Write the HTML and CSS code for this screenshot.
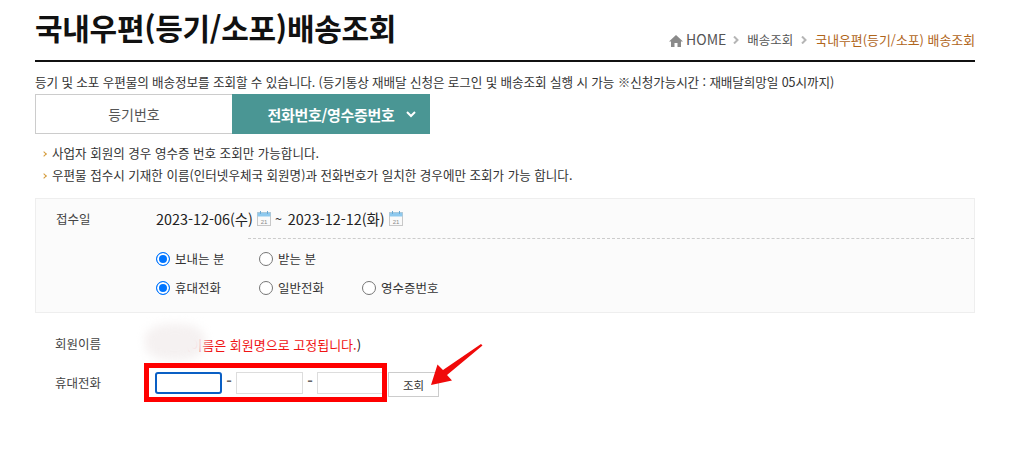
FILE: index.html
```html
<!DOCTYPE html>
<html lang="ko">
<head>
    <meta charset="utf-8">
    <title>국내우편(등기/소포) 배송조회</title>
    <link rel="stylesheet" href="styles.css">
</head>
<body>
    <div class="page-head">
        <h1>국내우편(등기/소포)배송조회</h1>
        <div class="crumbs">
            <svg class="home-icon" width="14" height="12" viewBox="0 0 14 12"><path d="M7 0 L14 6.5 H12 V12 H8.5 V8 H5.5 V12 H2 V6.5 H0 Z" fill="#8a8a8a"/></svg>
            <span class="crumb-home">HOME</span>
            <svg class="crumb-arrow" width="6" height="8" viewBox="0 0 6 8"><path d="M1 0.5 L4.5 4 L1 7.5" fill="none" stroke="#b5b5b5" stroke-width="2"/></svg>
            <span>배송조회</span>
            <svg class="crumb-arrow" width="6" height="8" viewBox="0 0 6 8"><path d="M1 0.5 L4.5 4 L1 7.5" fill="none" stroke="#b5b5b5" stroke-width="2"/></svg>
            <span class="crumb-current">국내우편(등기/소포) 배송조회</span>
        </div>
    </div>

    <p class="intro">등기 및 소포 우편물의 배송정보를 조회할 수 있습니다. (등기통상 재배달 신청은 로그인 및 배송조회 실행 시 가능 ※신청가능시간 : 재배달희망일 05시까지)</p>

    <div class="tabs">
        <div class="tab">등기번호</div>
        <div class="tab tab-on">
            전화번호/영수증번호
            <svg width="10" height="7" viewBox="0 0 10 7"><path d="M1 1 L5 5 L9 1" fill="none" stroke="#fff" stroke-width="2"/></svg>
        </div>
    </div>

    <ul class="notes">
        <li>사업자 회원의 경우 영수증 번호 조회만 가능합니다.</li>
        <li>우편물 접수시 기재한 이름(인터넷우체국 회원명)과 전화번호가 일치한 경우에만 조회가 가능 합니다.</li>
    </ul>

    <div class="panel">
        <div class="date-row">
            <div class="label">접수일</div>
            <div class="dates">
                <span>2023-12-06(수)</span>
                <svg class="cal" width="14" height="15" viewBox="0 0 14 15"><rect x="0.5" y="1.5" width="13" height="13" fill="#fafafa" stroke="#c8c8c8"/><rect x="0.5" y="1.5" width="13" height="4" fill="#8ec9ee"/><path d="M3.5 0 V3 M10.5 0 V3" stroke="#6aa9d4"/><text x="7" y="12.5" font-size="6" text-anchor="middle" fill="#8a8a8a" font-family="Liberation Sans">21</text></svg>
                <span class="tilde">~</span>
                <span>2023-12-12(화)</span>
                <svg class="cal" width="14" height="15" viewBox="0 0 14 15"><rect x="0.5" y="1.5" width="13" height="13" fill="#fafafa" stroke="#c8c8c8"/><rect x="0.5" y="1.5" width="13" height="4" fill="#8ec9ee"/><path d="M3.5 0 V3 M10.5 0 V3" stroke="#6aa9d4"/><text x="7" y="12.5" font-size="6" text-anchor="middle" fill="#8a8a8a" font-family="Liberation Sans">21</text></svg>
            </div>
        </div>
        <div class="radio-row">
            <label class="radio"><i class="dot dot-on"></i>보내는 분</label>
            <label class="radio"><i class="dot"></i>받는 분</label>
        </div>
        <div class="radio-row">
            <label class="radio"><i class="dot dot-on"></i>휴대전화</label>
            <label class="radio"><i class="dot"></i>일반전화</label>
            <label class="radio"><i class="dot"></i>영수증번호</label>
        </div>
    </div>

    <div class="form-row name-row">
        <div class="label">회원이름</div>
        <div class="name-text">
            <span class="blurred">이름</span><span class="warn">(이름은 회원명으로 고정됩니다.</span>)
            <span class="smudge"></span>
        </div>
    </div>
    <div class="form-row phone-row">
        <div class="label">휴대전화</div>
        <div class="phone">
            <span class="box box-focus"></span><span class="dash">-</span>
            <span class="box"></span><span class="dash">-</span>
            <span class="box box-last"></span>
            <span class="search-btn">조회</span>
            <span class="red-frame"></span>
            <svg class="red-arrow" width="60" height="50" viewBox="0 0 60 50"><path d="M54.5 3.5 L19 33 L24 38.5 L3 43 L9.5 22.5 L15 28 L53 2 Z" fill="#f00a0a"/></svg>
        </div>
    </div>
</body>
</html>
```

FILE: styles.css
```css
* {
    box-sizing: border-box;
}
body {
    margin: 0;
    width: 1027px;
    height: 456px;
    overflow: hidden;
    padding: 0 52px 0 35px;
    background: #fff;
    font-family: "Noto Sans CJK KR", "Noto Sans", sans-serif;
    font-size: 12.5px;
    color: #333;
}

/* title and breadcrumb */
.page-head {
    height: 62px;
    border-bottom: 2px solid #111;
    display: flex;
    justify-content: space-between;
    align-items: flex-start;
}
h1 {
    margin: 7px 0 0;
    font-size: 30px;
    line-height: 40px;
    font-weight: 700;
    letter-spacing: -0.3px;
    color: #111;
}
.crumbs {
    margin-top: 29px;
    display: flex;
    align-items: center;
    gap: 7px;
    height: 20px;
    font-size: 12.5px;
    color: #555;
    white-space: nowrap;
}
.crumb-home {
    font-size: 14px;
    margin-left: -4px;
    margin-right: -1px;
}
.crumb-arrow {
    margin: 2px 1px 0;
}
.crumb-current {
    font-size: 12.9px;
    color: #b0651a;
}
.home-icon {
    margin-top: 4px;
}

.intro {
    margin: 11px 0 0;
    height: 21px;
    line-height: 18px;
    font-size: 12.6px;
    letter-spacing: -0.1px;
    white-space: nowrap;
    color: #333;
}

/* tabs */
.tabs {
    display: flex;
    width: 395px;
    height: 40px;
}
.tab {
    width: 197px;
    border: 1px solid #ccc;
    border-right: none;
    display: flex;
    align-items: center;
    justify-content: center;
    font-size: 14px;
    color: #555;
}
.tab-on {
    width: 198px;
    border: none;
    padding-left: 21px;
    background: #4a9694;
    color: #fff;
    font-weight: 700;
    font-size: 15px;
    gap: 11px;
    letter-spacing: -0.3px;
}

.notes {
    list-style: none;
    margin: 8px 0 0;
    padding: 0 0 0 6px;
}
.notes li {
    height: 22px;
    line-height: 22px;
    padding-left: 11px;
    font-size: 12.55px;
    color: #333;
    position: relative;
    white-space: nowrap;
}
.notes li::before {
    content: "";
    position: absolute;
    left: 1px;
    top: 10px;
    width: 3px;
    height: 3px;
    border-top: 1px solid #d49a3a;
    border-right: 1px solid #d49a3a;
    transform: rotate(45deg);
}

/* search panel */
.panel {
    margin-top: 12px;
    height: 115px;
    background: #fbfbfb;
    border: 1px solid #eee;
    padding-top: 10px;
}
.date-row {
    display: flex;
    height: 30px;
}
.label {
    width: 120px;
    padding-left: 20px;
    font-size: 12.5px;
    line-height: 20px;
    color: #444;
}
.dates {
    display: flex;
    align-items: flex-start;
    gap: 4px;
    font-size: 14.4px;
    line-height: 20px;
    color: #222;
    flex-grow: 1;
    position: relative;
    height: 30px;
    white-space: nowrap;
}
.dates::after {
    content: "";
    position: absolute;
    left: 92px;
    right: 0;
    bottom: 0;
    border-bottom: 1px dashed #ccc;
}
.tilde {
    font-size: 12.5px;
    margin-right: 2px;
}
.cal {
    margin-top: 2px;
}
.radio-row {
    display: flex;
    padding-left: 120px;
    height: 29px;
    align-items: center;
}
.date-row + .radio-row {
    margin-top: 5px;
}
.radio {
    width: 103px;
    display: flex;
    align-items: center;
    gap: 5px;
    font-size: 12.5px;
    color: #333;
    white-space: nowrap;
}
.dot {
    width: 14px;
    height: 14px;
    border: 1px solid #767676;
    border-radius: 50%;
    background: #fff;
}
.dot-on {
    border: 1px solid #0075ff;
    background: #0075ff;
    box-shadow: inset 0 0 0 2px #fff;
}

/* member form */
.form-row {
    display: flex;
    align-items: center;
    height: 40px;
}
.form-row .label {
    color: #444;
}
.name-row {
    margin-top: 11px;
}
.phone-row {
    margin-top: -1px;
}
.name-text {
    position: relative;
    font-size: 13px;
    color: #222;
    white-space: nowrap;
}
.blurred {
    color: #ccc;
    margin-right: 7px;
}
.warn {
    color: #f01414;
}
.smudge {
    position: absolute;
    left: -10px;
    top: -11px;
    width: 60px;
    height: 36px;
    border-radius: 40%;
    background: #f5f1f1;
    filter: blur(5px);
}
.phone {
    position: relative;
    display: flex;
    align-items: flex-start;
    gap: 3px;
    margin-top: 3px;
}
.box {
    width: 67px;
    height: 22px;
    background: #fff;
    border: 1px solid #ddd;
}
.box-focus {
    border: 2px solid #0a5fc4;
    border-radius: 3px;
}
.dash {
    width: 8px;
    text-align: center;
    font-size: 15px;
    font-weight: 700;
    line-height: 18px;
    color: #666;
}
.search-btn {
    width: 51px;
    height: 25px;
    margin-left: 1px;
    border: 1px solid #ccc;
    background: #fff;
    font-size: 11.5px;
    color: #333;
    display: flex;
    align-items: center;
    justify-content: center;
}
.red-frame {
    position: absolute;
    left: -11px;
    top: -9px;
    width: 243px;
    height: 39px;
    border: 5px solid #f00;
}
.red-arrow {
    position: absolute;
    left: 273px;
    top: -30px;
}
```
